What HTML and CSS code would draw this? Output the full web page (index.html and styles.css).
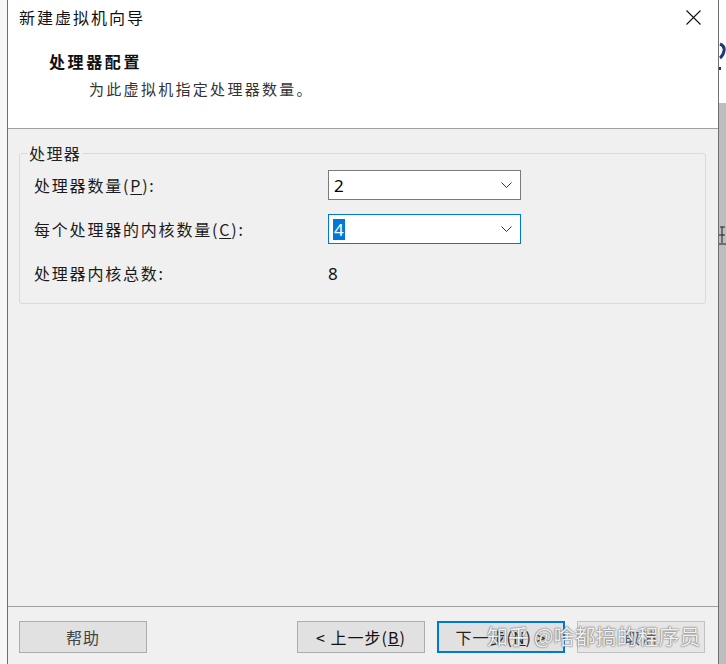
FILE: index.html
```html
<!DOCTYPE html>
<html lang="zh-CN">
<head>
<meta charset="utf-8">
<title>新建虚拟机向导</title>
<link rel="stylesheet" href="styles.css">
</head>
<body>
<div class="screen">
  <div class="strip-left"></div>
  <div class="dialog">
    <div class="header">
      <div class="titlebar">
        <span class="title">新建虚拟机向导</span>
        <svg class="close" width="15" height="15" viewBox="0 0 15 15"><path d="M0.5 0.5 L14.5 14.5 M14.5 0.5 L0.5 14.5" stroke="#111" stroke-width="1.1" fill="none"/></svg>
      </div>
      <div class="heading">处理器配置</div>
      <div class="subheading">为此虚拟机指定处理器数量。</div>
    </div>
    <div class="body">
      <fieldset class="group">
        <legend class="group-label">处理器</legend>
        <div class="grid">
          <div class="label">处理器数量(<u>P</u>):</div>
          <div class="combo">
            <span class="value">2</span>
            <svg class="chev" width="11" height="6" viewBox="0 0 11 6"><path d="M0.5 0.5 L5.5 5.5 L10.5 0.5" stroke="#333" stroke-width="1" fill="none"/></svg>
          </div>
          <div class="label">每个处理器的内核数量(<u>C</u>):</div>
          <div class="combo focused">
            <span class="value selected">4</span>
            <svg class="chev" width="11" height="6" viewBox="0 0 11 6"><path d="M0.5 0.5 L5.5 5.5 L10.5 0.5" stroke="#333" stroke-width="1" fill="none"/></svg>
          </div>
          <div class="label">处理器内核总数:</div>
          <div class="total">8</div>
        </div>
      </fieldset>
    </div>
    <div class="footer">
      <button class="btn help">帮助</button>
      <div class="spacer"></div>
      <button class="btn">&lt; 上一步(<u>B</u>)</button>
      <button class="btn default">下一步(<u>N</u>) &gt;</button>
      <button class="btn cancel">取消</button>
    </div>
    <div class="watermark">知乎 @啥都搞的程序员</div>
  </div>
  <div class="strip-right">
    <div class="strip-top">
      <svg width="7" height="103" viewBox="0 0 7 103"><path d="M1 44 Q6 46 5 51 Q4 56 1 58" stroke="#1f3a7a" stroke-width="3" fill="none"/><rect x="0" y="67" width="2" height="3" fill="#333"/></svg>
    </div>
    <div class="strip-bottom">
      <svg width="7" height="150" viewBox="0 0 7 150"><path d="M1 124 L6 124 M3 124 L3 140 M0 132 L6 132 M0 141 L7 141" stroke="#222" stroke-width="1" fill="none"/></svg>
    </div>
  </div>
</div>
</body>
</html>
```
FILE: styles.css
```css
* { box-sizing: border-box; }
html, body { margin: 0; padding: 0; }
body {
  width: 726px;
  height: 664px;
  overflow: hidden;
  font-family: "Noto Sans CJK SC", "Noto Sans", sans-serif;
  color: #111;
}
.screen {
  display: flex;
  width: 726px;
  height: 664px;
}
.strip-left {
  width: 7px;
  flex: none;
  background: #f7f7f7;
}
.dialog {
  position: relative;
  width: 712px;
  flex: none;
  display: flex;
  flex-direction: column;
  border-left: 1px solid #6f6f6f;
  border-right: 1px solid #6f6f6f;
  background: #f0f0f0;
}
.strip-right {
  width: 7px;
  height: 664px;
  flex: none;
  display: flex;
  flex-direction: column;
  background: #bdbdbd;
}
.strip-top { height: 103px; flex: none; background: #fff; }
.strip-top svg, .strip-bottom svg { display: block; }
.strip-bottom { height: 561px; flex: none; background: #bdbdbd; }

.header {
  height: 129px;
  background: #fff;
  border-bottom: 1px solid #a0a0a0;
}
.titlebar {
  height: 34px;
  display: flex;
  align-items: center;
  justify-content: space-between;
  padding: 0 17px 0 11px;
}
.title {
  font-size: 16px;
  letter-spacing: 2px;
  line-height: 20px;
  color: #111;
}
.close { display: block; }
.heading {
  margin-top: 16px;
  padding-left: 41px;
  font-size: 16px;
  font-weight: 700;
  letter-spacing: 2.6px;
  line-height: 22px;
  color: #111;
}
.subheading {
  margin-top: 6px;
  padding-left: 81px;
  font-size: 15px;
  letter-spacing: 2.3px;
  line-height: 22px;
  color: #333;
}

.body {
  flex: 1;
  padding: 13px 12px 0 11px;
}
.group {
  margin: 0;
  padding: 6px 14px 15px 14px;
  border: 1px solid #dadada;
  border-radius: 3px;
}
.group-label {
  padding: 0 2px;
  margin-left: -7px;
  font-size: 16px;
  line-height: 22px;
  letter-spacing: 1.4px;
  color: #222;
}
.grid {
  display: grid;
  grid-template-columns: 294px 193px;
  grid-auto-rows: 30px;
  row-gap: 14px;
  align-items: center;
}
.label {
  font-size: 16px;
  letter-spacing: 1.8px;
  line-height: 22px;
  color: #1a1a1a;
}
.label u { text-underline-offset: 2px; }
.combo {
  height: 30px;
  display: flex;
  align-items: center;
  justify-content: space-between;
  padding: 0 8px 0 4px;
  background: #fff;
  border: 1px solid #7a7a7a;
}
.combo.focused { border-color: #0078d7; }
.value {
  font-family: "Noto Sans", sans-serif;
  font-size: 17px;
  line-height: 21px;
  color: #000;
  padding: 0 1px;
}
.value.selected {
  background: #0078d7;
  color: #fff;
}
.chev { display: block; }
.total {
  font-family: "Noto Sans", sans-serif;
  font-size: 17px;
  color: #111;
}

.footer {
  height: 58px;
  border-top: 1px solid #a0a0a0;
  display: flex;
  align-items: flex-start;
  padding: 14px 13px 0 11px;
  gap: 12px;
}
.spacer { flex: 1; }
.btn {
  width: 128px;
  height: 32px;
  margin: 0;
  padding: 0;
  font-family: "Noto Sans CJK SC", "Noto Sans", sans-serif;
  font-size: 16px;
  letter-spacing: 1px;
  color: #111;
  background: #e1e1e1;
  border: 1px solid #adadad;
}
.btn.help { color: #444; }
.btn.default {
  border: 2px solid #0078d7;
  color: #222;
}
.btn.cancel {
  background: #e6e6e6;
  border-color: #c2c2c2;
  color: #555;
}
.watermark {
  position: absolute;
  left: 479px;
  top: 620px;
  font-size: 21px;
  letter-spacing: 0;
  color: rgba(255, 255, 255, 0.92);
  text-shadow: 0 0 1px #555, 0 0 2px #777;
  white-space: nowrap;
}
```
